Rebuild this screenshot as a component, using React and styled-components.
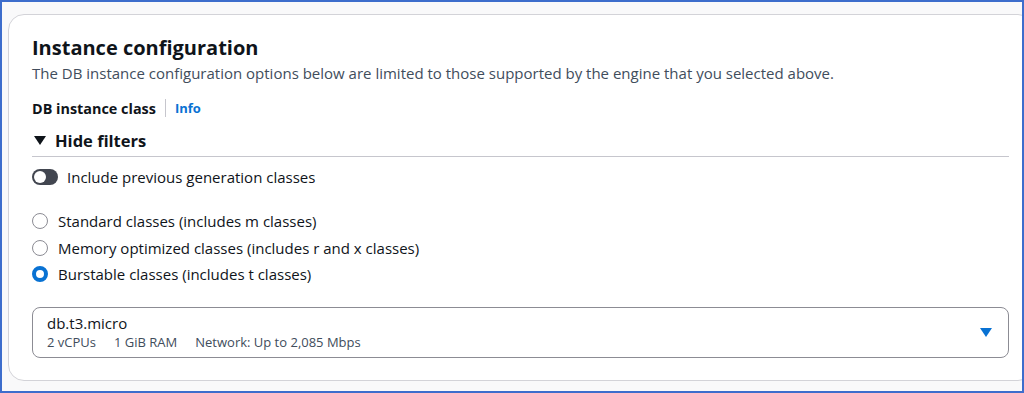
import styled, { createGlobalStyle } from 'styled-components';

const GlobalStyle = createGlobalStyle`
  html, body {
    margin: 0;
    padding: 0;
    background: #ffffff;
  }
  body {
    font-family: "Open Sans", "Noto Sans", Arial, sans-serif;
    color: #0f141a;
  }
`;

const Frame = styled.div`
  box-sizing: border-box;
  width: 1024px;
  height: 393px;
  overflow: hidden;
  border: 2px solid #3d6dcc;
  background: #f9f9fa;
  padding: 12px 0 0 6px;
`;

const Card = styled.section`
  box-sizing: border-box;
  width: 1026px;
  height: 367px;
  background: #ffffff;
  border: 1px solid #d3d3d8;
  border-radius: 16px;
  padding: 20px 24px 0 23px;
`;

const Title = styled.h2`
  margin: 0;
  font-size: 20px;
  line-height: 26px;
  font-weight: 700;
`;

const Description = styled.p`
  margin: 2px 0 0;
  font-size: 15px;
  line-height: 20px;
  color: #414d5c;
`;

const LabelRow = styled.div`
  display: flex;
  align-items: center;
  margin-top: 15px;
  height: 20px;
`;

const Label = styled.span`
  font-size: 14.4px;
  font-weight: 700;
`;

const Divider = styled.span`
  width: 1px;
  height: 18px;
  background: #c6c6cd;
  margin: 0 9px 0 9px;
`;

const InfoLink = styled.a`
  font-size: 13px;
  font-weight: 700;
  color: #0972d3;
  text-decoration: none;
`;

const FilterToggle = styled.div`
  display: flex;
  align-items: center;
  gap: 9px;
  margin-top: 11px;
  padding-bottom: 4px;
  border-bottom: 1px solid #c6c6cd;
  font-size: 16.5px;
  font-weight: 700;
`;

const Caret = styled.span`
  width: 0;
  height: 0;
  border-left: 6px solid transparent;
  border-right: 6px solid transparent;
  border-top: 9px solid #0f141a;
  margin-left: 2px;
`;

const Row = styled.label`
  display: flex;
  align-items: center;
  gap: ${p => p.gap || 10}px;
  font-size: 15px;
  line-height: 20px;
  margin-top: ${p => p.top || 0}px;
  height: ${p => p.h || 26.5}px;
`;

const Switch = styled.span`
  position: relative;
  width: 26px;
  height: 16px;
  border-radius: 8px;
  background: #424650;
  flex-shrink: 0;

  &::after {
    content: '';
    position: absolute;
    top: 2px;
    left: 2px;
    width: 12px;
    height: 12px;
    border-radius: 50%;
    background: #ffffff;
  }
`;

const Radio = styled.span`
  box-sizing: border-box;
  width: 16px;
  height: 16px;
  border-radius: 50%;
  flex-shrink: 0;
  border: ${p => (p.checked ? '4px solid #0972d3' : '1.5px solid #8c8c94')};
  background: #ffffff;
`;

const Select = styled.div`
  box-sizing: border-box;
  display: flex;
  align-items: center;
  justify-content: space-between;
  margin-top: 19px;
  height: 51px;
  border: 1px solid #8c8c94;
  border-radius: 8px;
  padding: 0 16px 0 14px;
`;

const SelectText = styled.div`
  display: flex;
  flex-direction: column;
`;

const SelectValue = styled.span`
  font-size: 15px;
  line-height: 20px;
`;

const Tags = styled.span`
  display: flex;
  gap: 18px;
  font-size: 13px;
  line-height: 18px;
  color: #414d5c;
`;

const DropIcon = styled.span`
  width: 0;
  height: 0;
  border-left: 6px solid transparent;
  border-right: 6px solid transparent;
  border-top: 9px solid #0972d3;
`;

const classes = [
  { label: 'Standard classes (includes m classes)', checked: false },
  { label: 'Memory optimized classes (includes r and x classes)', checked: false },
  { label: 'Burstable classes (includes t classes)', checked: true },
];

export default function App() {
  return (
    <>
      <GlobalStyle />
      <Frame>
        <Card>
          <Title>Instance configuration</Title>
          <Description>
            The DB instance configuration options below are limited to those supported by the engine that you selected above.
          </Description>
          <LabelRow>
            <Label>DB instance class</Label>
            <Divider />
            <InfoLink href="#">Info</InfoLink>
          </LabelRow>
          <FilterToggle>
            <Caret />
            Hide filters
          </FilterToggle>
          <Row gap={9} top={7} h={26}>
            <Switch />
            Include previous generation classes
          </Row>
          <Row top={18}>
            <Radio checked={classes[0].checked} />
            {classes[0].label}
          </Row>
          {classes.slice(1).map(c => (
            <Row key={c.label}>
              <Radio checked={c.checked} />
              {c.label}
            </Row>
          ))}
          <Select>
            <SelectText>
              <SelectValue>db.t3.micro</SelectValue>
              <Tags>
                <span>2 vCPUs</span>
                <span>1 GiB RAM</span>
                <span>Network: Up to 2,085 Mbps</span>
              </Tags>
            </SelectText>
            <DropIcon />
          </Select>
        </Card>
      </Frame>
    </>
  );
}
